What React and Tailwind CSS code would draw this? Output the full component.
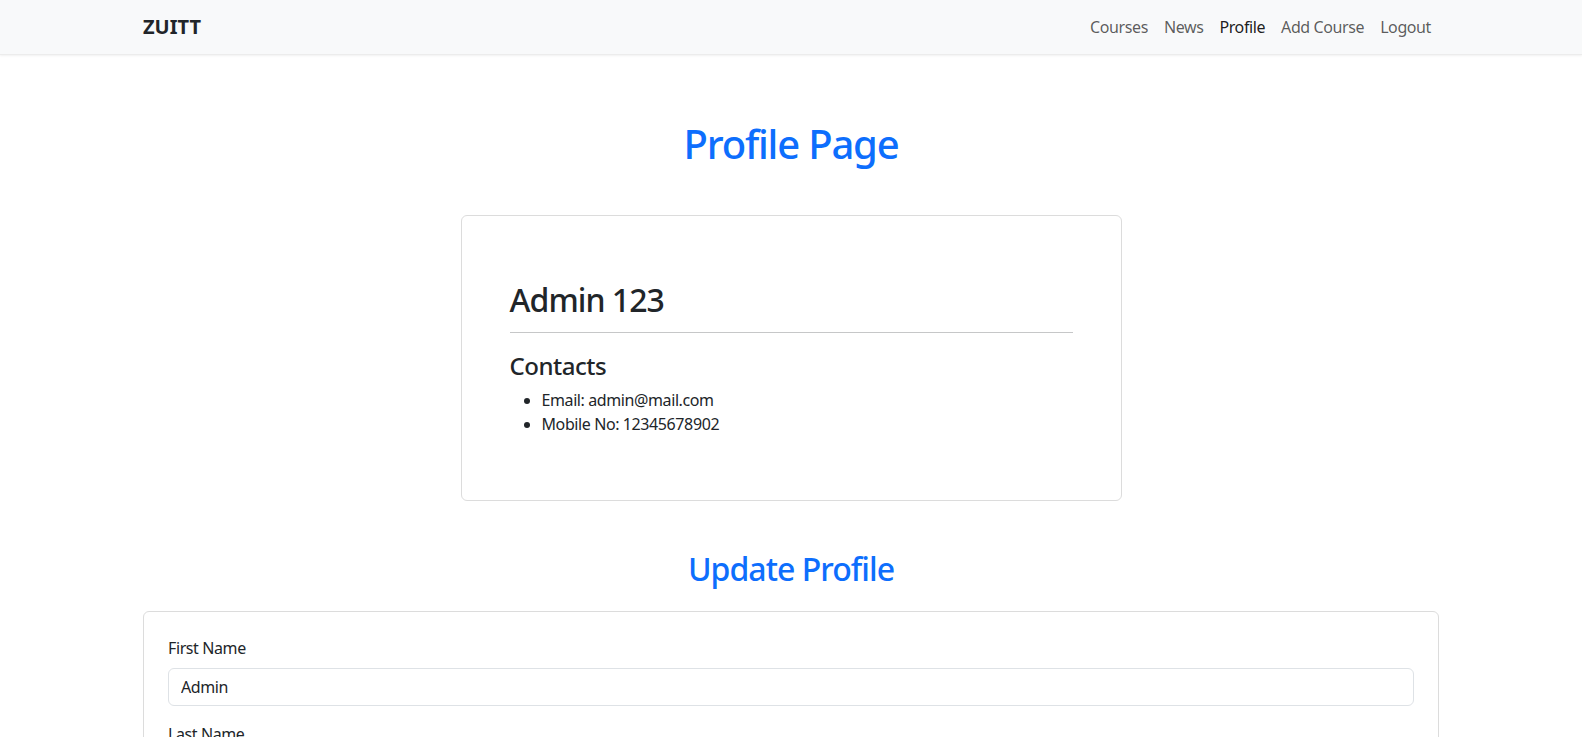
export default function App() {
  return (
    <div className="min-h-screen bg-white text-[#212529]" style={{ fontFamily: "'Noto Sans', sans-serif" }}>
      <NavBar />
      <main className="w-[1320px] mx-auto px-3">
        <h1 className="mt-[65px] mb-[47px] text-center text-[40px] leading-[48px] font-medium tracking-[-0.03em] text-[#0d6efd]">
          Profile Page
        </h1>
        <ProfileCard />
        <h2 className="mt-[49px] mb-[23px] text-center text-[32px] leading-[38px] font-medium tracking-[-0.03em] text-[#0d6efd]">
          Update Profile
        </h2>
        <UpdateForm />
      </main>
    </div>
  )
}

function NavBar() {
  const links = ['Courses', 'News', 'Profile', 'Add Course', 'Logout']
  return (
    <nav className="h-[55px] bg-[#f8f9fa] shadow-[0_1px_2px_rgba(0,0,0,0.06)] border-b border-[#ececec]">
      <div className="w-[1320px] mx-auto px-3 h-full flex items-center justify-between">
        <span className="text-[20px] font-bold text-[#212529]">ZUITT</span>
        <div className="flex">
          {links.map((l) => (
            <a
              key={l}
              className={`px-2 text-base leading-6 tracking-[-0.025em] ${l === 'Profile' ? 'text-black/90' : 'text-black/65'}`}
            >
              {l}
            </a>
          ))}
        </div>
      </div>
    </nav>
  )
}

function ProfileCard() {
  return (
    <div className="w-[661px] mx-auto border border-[#dcdcdc] rounded-md px-12 pt-[65px] pb-12">
      <h2 className="text-[32px] leading-[38px] font-medium tracking-[-0.03em]">Admin 123</h2>
      <hr className="mt-[13px] mb-[18px] border-0 border-t border-[#c6c7c8]" />
      <h4 className="text-2xl leading-[29px] font-medium tracking-[-0.02em] mb-2">Contacts</h4>
      <ul className="list-disc pl-8 text-base leading-6 tracking-[-0.025em] mb-4">
        <li>Email: admin@mail.com</li>
        <li>Mobile No: 12345678902</li>
      </ul>
    </div>
  )
}

function Field({ label, value }) {
  return (
    <div className="mb-4">
      <label className="block mb-2 text-base leading-6 tracking-[-0.025em]">{label}</label>
      <input
        defaultValue={value}
        className="w-full h-[38px] px-3 border border-[#dee2e6] rounded-md text-base tracking-[-0.025em] text-[#212529] outline-none"
      />
    </div>
  )
}

function UpdateForm() {
  return (
    <div className="border border-[#dcdcdc] rounded-md p-6 mb-12">
      <Field label="First Name" value="Admin" />
      <Field label="Last Name" value="123" />
      <Field label="Mobile Number" value="12345678902" />
      <button className="bg-[#0d6efd] text-white rounded-md px-3 py-1.5 text-base">Update</button>
    </div>
  )
}
